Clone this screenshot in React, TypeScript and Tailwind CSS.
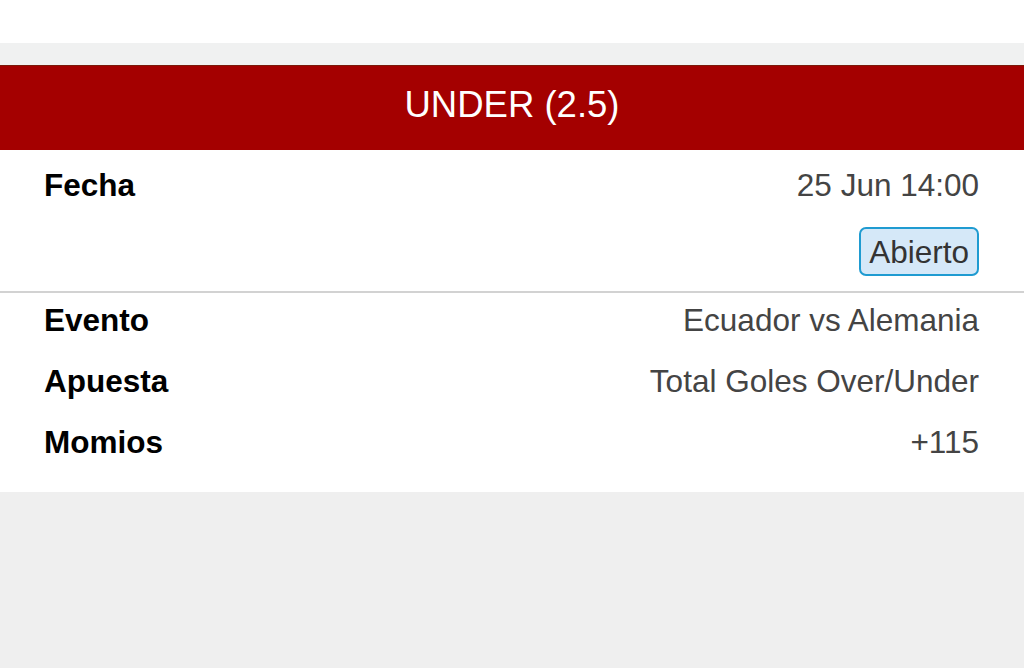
import React from "react";

interface Row {
    label: string;
    value: string;
}

const rows: Row[] = [
    { label: "Evento", value: "Ecuador vs Alemania" },
    { label: "Apuesta", value: "Total Goles Over/Under" },
    { label: "Momios", value: "+115" },
];

const App = () => {
    return (
        <div
            className="min-h-[668px] bg-[#efefef]"
            style={{ fontFamily: '"Liberation Sans", Arial, sans-serif' }}
        >
            {/* top bar */}
            <div className="h-[43px] bg-white" />
            <div className="h-[22px] bg-[#f0f1f1]" />

            {/* ticket title */}
            <div className="h-[85px] bg-[#a40000] border-t border-[#7a1a0a] flex items-center justify-center pb-[6px]">
                <span className="text-white text-[36.5px] leading-[40px]">UNDER (2.5)</span>
            </div>

            <div className="bg-white">
                {/* fecha + estado */}
                <div className="pl-[44px] pr-[45px] pb-[15px] border-b-2 border-[#d2d2d2]">
                    <div className="h-[66px] pt-[3px] flex items-center justify-between text-[31.5px] leading-[36px]">
                        <span className="font-bold text-black">Fecha</span>
                        <span className="text-[#444]">25 Jun 14:00</span>
                    </div>
                    <div className="mt-[11px] flex justify-end">
                        <span className="h-[49px] px-[8px] flex items-center rounded-[7px] border-2 border-[#1f9bd1] bg-[#d5e8f8] text-[31.5px] leading-[36px] text-[#333]">
                            Abierto
                        </span>
                    </div>
                </div>

                {/* detalle */}
                <div className="pl-[44px] pr-[45px] pb-[16px]">
                    {rows.map((row) => (
                        <div
                            key={row.label}
                            className="h-[61px] pt-[9px] flex items-start justify-between text-[31.5px] leading-[36px]"
                        >
                            <span className="font-bold text-black">{row.label}</span>
                            <span className="text-[#444]">{row.value}</span>
                        </div>
                    ))}
                </div>
            </div>
        </div>
    );
};

export default App;
